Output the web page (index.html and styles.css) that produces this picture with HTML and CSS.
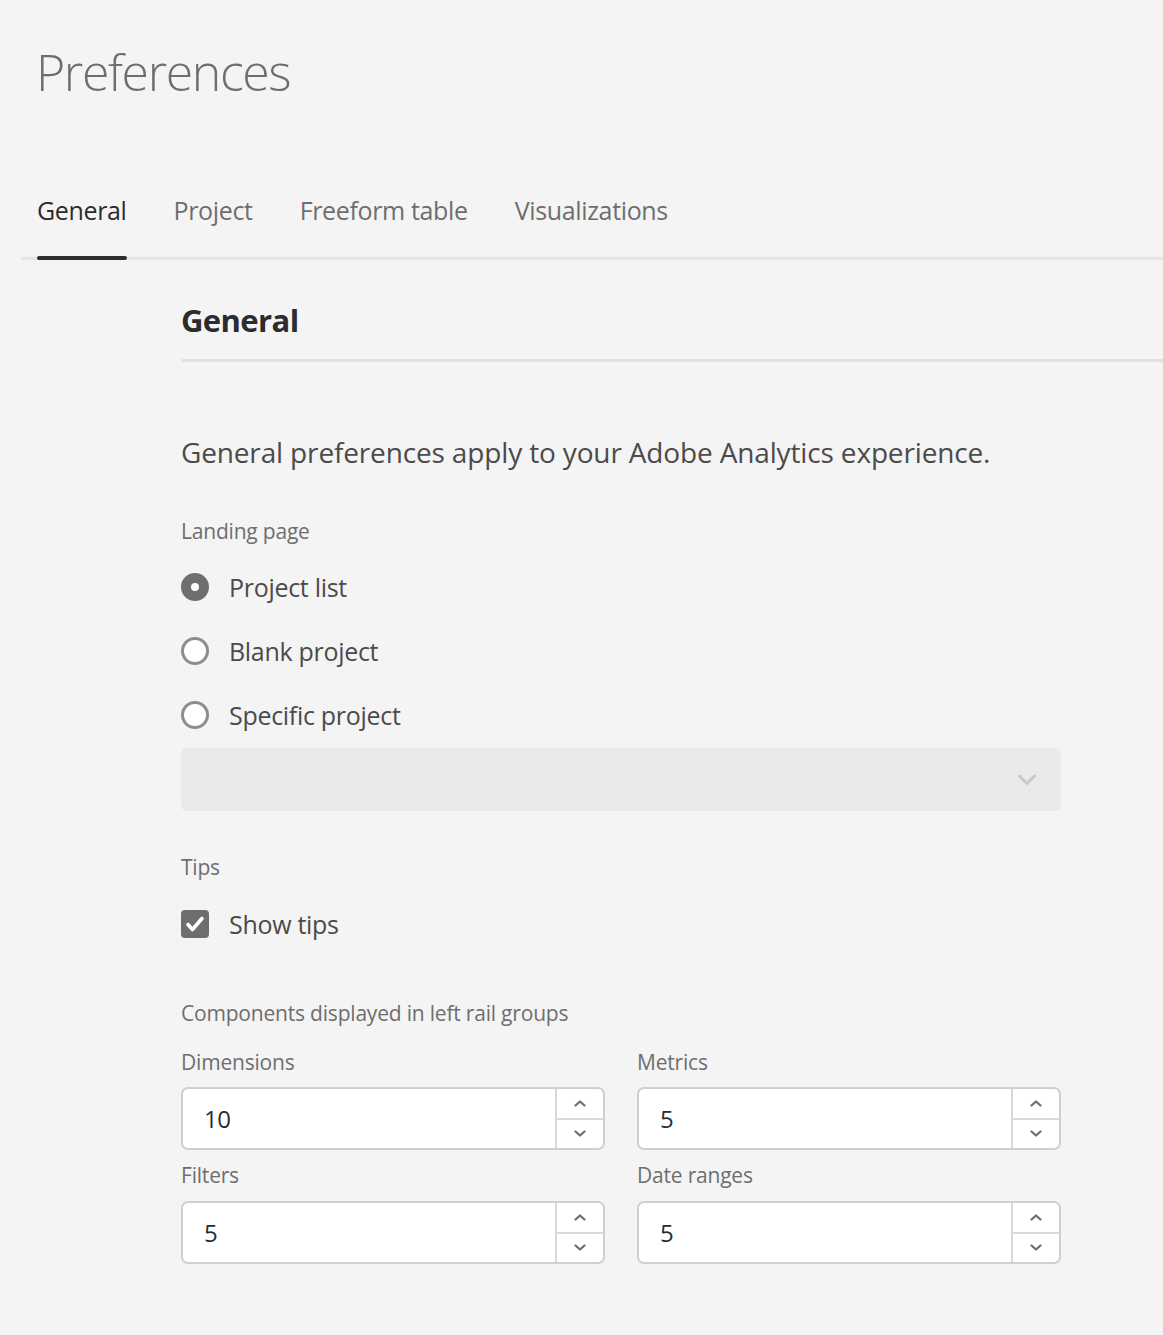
FILE: index.html
```html
<!DOCTYPE html>
<html lang="en">
<head>
<meta charset="utf-8">
<title>Preferences</title>
<link rel="stylesheet" href="styles.css">
</head>
<body>
<div class="page">
  <h1 class="title">Preferences</h1>
  <nav class="tabs">
    <div class="tab active">General</div>
    <div class="tab">Project</div>
    <div class="tab">Freeform table</div>
    <div class="tab">Visualizations</div>
  </nav>
  <main class="content">
    <h2 class="section-title">General</h2>
    <div class="divider"></div>
    <p class="desc">General preferences apply to your Adobe Analytics experience.</p>

    <div class="field-label landing">Landing page</div>
    <div class="radio-group">
      <div class="radio-row"><span class="radio checked"></span><span class="opt">Project list</span></div>
      <div class="radio-row"><span class="radio"></span><span class="opt">Blank project</span></div>
      <div class="radio-row"><span class="radio"></span><span class="opt">Specific project</span></div>
    </div>
    <div class="select">
      <svg class="select-chev" width="20" height="12" viewBox="0 0 20 12"><path d="M2.5 2 L10 9.5 L17.5 2" fill="none" stroke="#c8c8c8" stroke-width="3" stroke-linecap="round" stroke-linejoin="round"/></svg>
    </div>

    <div class="field-label tips">Tips</div>
    <div class="check-row">
      <span class="checkbox"><svg width="28" height="28" viewBox="0 0 28 28"><path d="M7 14.5 L11.5 19.5 L21 8.5" fill="none" stroke="#fff" stroke-width="3.6" stroke-linecap="round" stroke-linejoin="round"/></svg></span>
      <span class="opt">Show tips</span>
    </div>

    <div class="field-label comps">Components displayed in left rail groups</div>
    <div class="grid">
      <div class="cell">
        <div class="num-label">Dimensions</div>
        <div class="num">
          <span class="num-value">10</span>
          <div class="stepper">
            <span class="step"><svg width="14" height="9" viewBox="0 0 14 9"><path d="M2.5 6.5 L7 2.5 L11.5 6.5" fill="none" stroke="#6e6e6e" stroke-width="2.3" stroke-linecap="round" stroke-linejoin="round"/></svg></span>
            <span class="step"><svg width="14" height="9" viewBox="0 0 14 9"><path d="M2.5 2.5 L7 6.5 L11.5 2.5" fill="none" stroke="#6e6e6e" stroke-width="2.3" stroke-linecap="round" stroke-linejoin="round"/></svg></span>
          </div>
        </div>
      </div>
      <div class="cell">
        <div class="num-label">Metrics</div>
        <div class="num">
          <span class="num-value">5</span>
          <div class="stepper">
            <span class="step"><svg width="14" height="9" viewBox="0 0 14 9"><path d="M2.5 6.5 L7 2.5 L11.5 6.5" fill="none" stroke="#6e6e6e" stroke-width="2.3" stroke-linecap="round" stroke-linejoin="round"/></svg></span>
            <span class="step"><svg width="14" height="9" viewBox="0 0 14 9"><path d="M2.5 2.5 L7 6.5 L11.5 2.5" fill="none" stroke="#6e6e6e" stroke-width="2.3" stroke-linecap="round" stroke-linejoin="round"/></svg></span>
          </div>
        </div>
      </div>
      <div class="cell">
        <div class="num-label">Filters</div>
        <div class="num">
          <span class="num-value">5</span>
          <div class="stepper">
            <span class="step"><svg width="14" height="9" viewBox="0 0 14 9"><path d="M2.5 6.5 L7 2.5 L11.5 6.5" fill="none" stroke="#6e6e6e" stroke-width="2.3" stroke-linecap="round" stroke-linejoin="round"/></svg></span>
            <span class="step"><svg width="14" height="9" viewBox="0 0 14 9"><path d="M2.5 2.5 L7 6.5 L11.5 2.5" fill="none" stroke="#6e6e6e" stroke-width="2.3" stroke-linecap="round" stroke-linejoin="round"/></svg></span>
          </div>
        </div>
      </div>
      <div class="cell">
        <div class="num-label">Date ranges</div>
        <div class="num">
          <span class="num-value">5</span>
          <div class="stepper">
            <span class="step"><svg width="14" height="9" viewBox="0 0 14 9"><path d="M2.5 6.5 L7 2.5 L11.5 6.5" fill="none" stroke="#6e6e6e" stroke-width="2.3" stroke-linecap="round" stroke-linejoin="round"/></svg></span>
            <span class="step"><svg width="14" height="9" viewBox="0 0 14 9"><path d="M2.5 2.5 L7 6.5 L11.5 2.5" fill="none" stroke="#6e6e6e" stroke-width="2.3" stroke-linecap="round" stroke-linejoin="round"/></svg></span>
          </div>
        </div>
      </div>
    </div>
  </main>
</div>
</body>
</html>
```

FILE: styles.css
```css
* { box-sizing: border-box; }
html, body {
  margin: 0;
  padding: 0;
  background: #f4f4f4;
}
body {
  font-family: "Open Sans", "Noto Sans", "Liberation Sans", sans-serif;
  color: #4b4b4b;
  width: 1163px;
  height: 1335px;
  overflow: hidden;
}
.page {
  padding-top: 37px;
}
.title {
  margin: 0 0 0 36px;
  font-size: 50px;
  font-weight: 300;
  line-height: 70px;
  color: #6e6e6e;
  letter-spacing: -1.4px;
}
.tabs {
  margin: 73px 0 0 21px;
  padding-left: 16px;
  display: flex;
  gap: 47px;
  border-bottom: 3px solid #e6e6e6;
  height: 80px;
}
.tab {
  position: relative;
  font-size: 25px;
  line-height: 34px;
  padding-top: 13px;
  color: #6e6e6e;
  letter-spacing: -0.35px;
  height: 77px;
}
.tab.active {
  color: #2c2c2c;
}
.tab.active::after {
  content: "";
  position: absolute;
  left: 0;
  right: 0;
  bottom: -3px;
  height: 4px;
  border-radius: 2px;
  background: #2c2c2c;
}
.content {
  margin-left: 181px;
}
.section-title {
  margin: 0;
  padding-top: 40px;
  font-size: 31px;
  font-weight: 700;
  line-height: 40px;
  color: #2c2c2c;
  letter-spacing: -0.6px;
}
.divider {
  margin-top: 19px;
  height: 3px;
  background: #e1e1e1;
  border-radius: 2px 0 0 2px;
}
.desc {
  margin: 70px 0 0;
  font-size: 28px;
  line-height: 40px;
  color: #4b4b4b;
  letter-spacing: -0.15px;
}
.field-label {
  font-size: 21px;
  line-height: 30px;
  color: #6e6e6e;
  letter-spacing: -0.2px;
}
.landing { margin-top: 44px; }
.radio-group {
  margin-top: 9px;
  display: flex;
  flex-direction: column;
}
.radio-row, .check-row {
  display: flex;
  align-items: center;
  height: 64px;
}
.radio {
  width: 28px;
  height: 28px;
  border-radius: 50%;
  border: 3px solid #8e8e8e;
  background: #fff;
  flex: none;
}
.radio.checked {
  border: 10px solid #6e6e6e;
  background: #fff;
}
.opt {
  margin-left: 20px;
  font-size: 25px;
  line-height: 34px;
  color: #4b4b4b;
  letter-spacing: -0.3px;
}
.select {
  width: 880px;
  height: 63px;
  margin-top: 1px;
  background: #e9e9e9;
  border-radius: 6px;
  display: flex;
  align-items: center;
  justify-content: flex-end;
  padding-right: 24px;
}
.tips { margin-top: 41px; }
.check-row { margin-top: 10px; height: 64px; }
.checkbox {
  width: 28px;
  height: 28px;
  border-radius: 4px;
  background: #6e6e6e;
  display: flex;
  flex: none;
}
.comps { margin-top: 42px; }
.grid {
  width: 880px;
  margin-top: 19px;
  display: grid;
  grid-template-columns: 424px 424px;
  column-gap: 32px;
  row-gap: 10px;
}
.num-label {
  font-size: 21px;
  line-height: 30px;
  color: #6e6e6e;
  letter-spacing: -0.2px;
  margin-bottom: 10px;
}
.cell:nth-child(n+3) .num-label { margin-bottom: 11px; }
.num {
  height: 63px;
  background: #fff;
  border: 2px solid #cfcfcf;
  border-radius: 7px;
  display: flex;
  align-items: center;
}
.num-value {
  flex: 1;
  padding-left: 21px;
  font-size: 24px;
  color: #2c2c2c;
  letter-spacing: -0.5px;
}
.stepper {
  width: 48px;
  height: 100%;
  border-left: 2px solid #d8d8d8;
  display: flex;
  flex-direction: column;
}
.step {
  flex: 1;
  display: flex;
  align-items: center;
  justify-content: center;
}
.step + .step {
  border-top: 2px solid #d8d8d8;
}
```
